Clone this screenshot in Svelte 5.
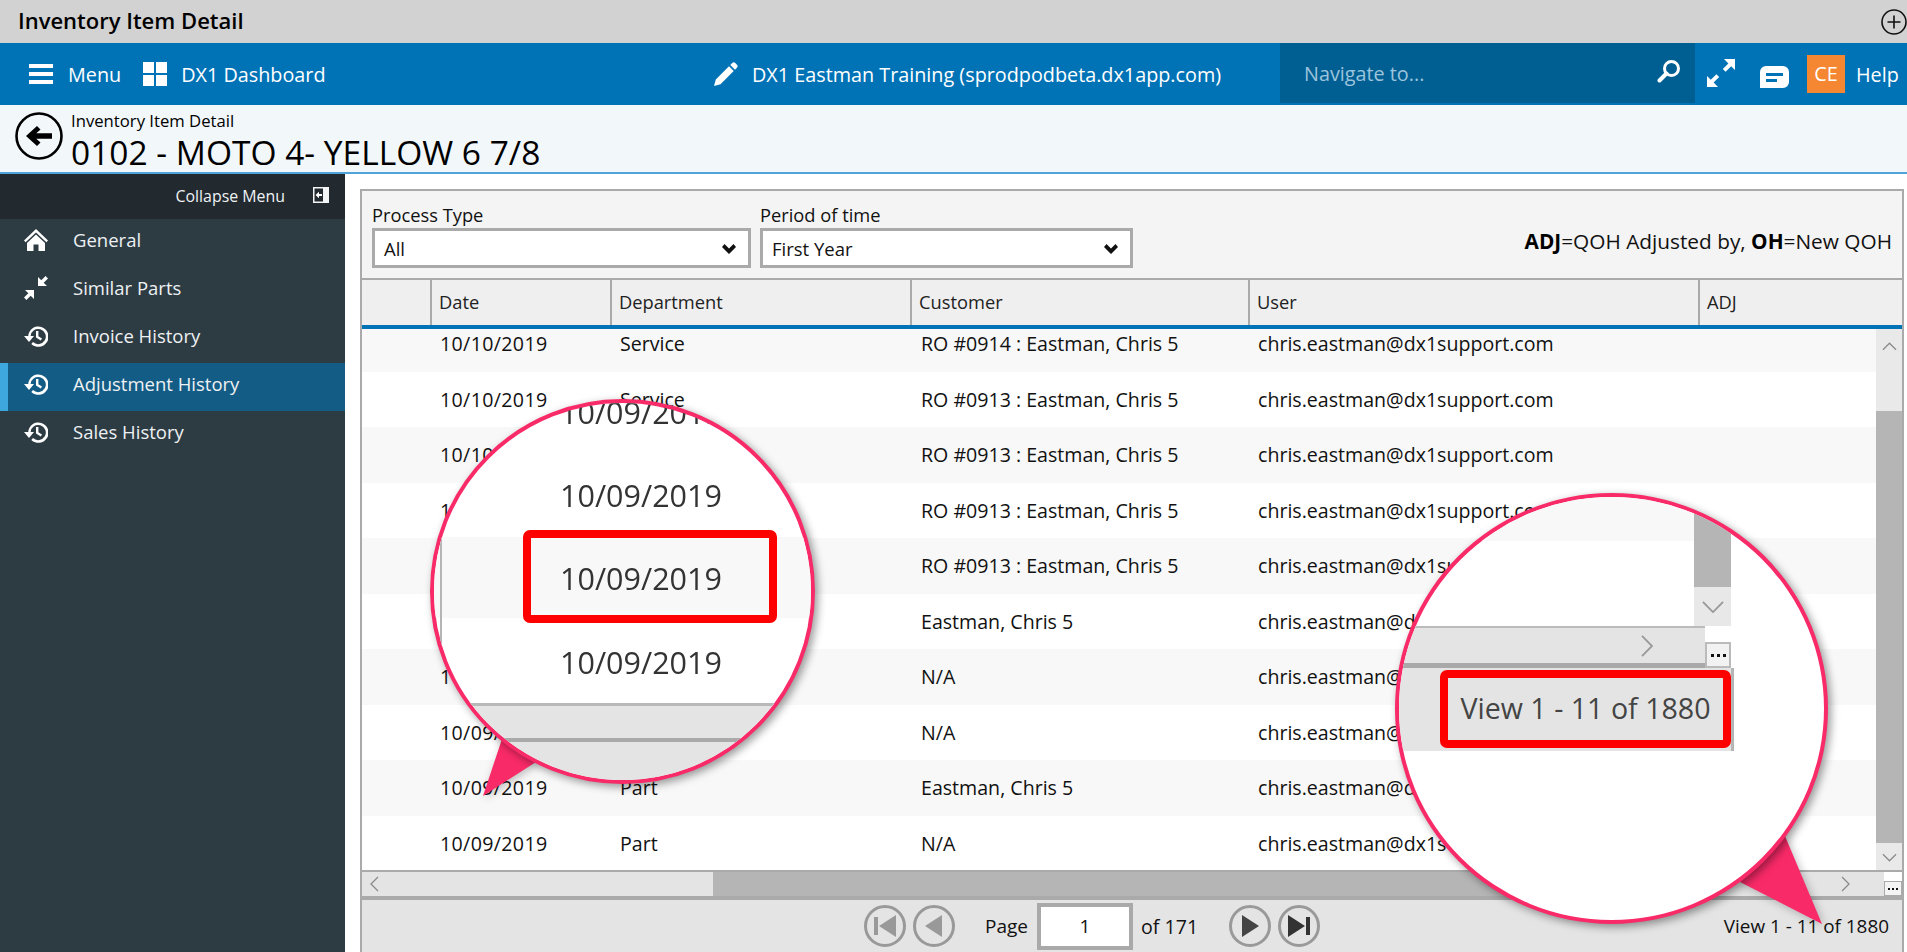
<script>
  const rows = [
    ['10/10/2019', 'Service', 'RO #0914 : Eastman, Chris 5'],
    ['10/10/2019', 'Service', 'RO #0913 : Eastman, Chris 5'],
    ['10/10/2019', 'Service', 'RO #0913 : Eastman, Chris 5'],
    ['10/09/2019', 'Service', 'RO #0913 : Eastman, Chris 5'],
    ['10/09/2019', 'Service', 'RO #0913 : Eastman, Chris 5'],
    ['10/09/2019', 'Part', 'Eastman, Chris 5'],
    ['10/09/2019', 'Part', 'N/A'],
    ['10/09/2019', 'Part', 'N/A'],
    ['10/09/2019', 'Part', 'Eastman, Chris 5'],
    ['10/09/2019', 'Part', 'N/A']
  ];
  const nav = [
    { label: 'General', icon: 'home' },
    { label: 'Similar Parts', icon: 'compress' },
    { label: 'Invoice History', icon: 'history' },
    { label: 'Adjustment History', icon: 'history', active: true },
    { label: 'Sales History', icon: 'history' }
  ];
</script>

<div class="page">
  <div class="titlebar">
    <span>Inventory Item Detail</span>
    <svg class="plus" viewBox="0 0 26 26"><circle cx="13" cy="13" r="12" fill="none" stroke="#111" stroke-width="1.6"/><path d="M6.5 13h13M13 6.5v13" stroke="#111" stroke-width="1.6"/></svg>
  </div>

  <div class="topnav">
    <div class="nav-left">
      <svg class="burger" viewBox="0 0 24 20"><path d="M0 0h24v4H0zM0 8h24v4H0zM0 16h24v4H0z" fill="#fff"/></svg>
      <span class="menu">Menu</span>
      <svg class="win" viewBox="0 0 24 24"><path d="M0 0h11v11H0zM13 0h11v11H13zM0 13h11v11H0zM13 13h11v11H13z" fill="#fff"/></svg>
      <span>DX1 Dashboard</span>
    </div>
    <div class="nav-mid">
      <svg class="pencil" viewBox="0 0 24 24"><path d="M0 24l1.800-6.500L15 4.300l4.700 4.700L6.500 22.200zM16.300 3l1.900-1.900a2.200 2.200 0 0 1 3.100 0l1.600 1.600a2.200 2.200 0 0 1 0 3.100L21 7.700z" fill="#fff"/></svg>
      <span>DX1 Eastman Training (sprodpodbeta.dx1app.com)</span>
    </div>
    <div class="search">
      <span>Navigate to...</span>
      <svg viewBox="0 0 24 24"><circle cx="14.500" cy="9.500" r="7" fill="none" stroke="#fff" stroke-width="3"/><path d="M9.500 14.500L2.500 21.500" stroke="#fff" stroke-width="4" stroke-linecap="round"/></svg>
    </div>
    <div class="nav-right">
      <svg class="expand" viewBox="0 0 28 28"><path d="M17 0h11v11l-3.800-3.800-5.600 5.600-2.800-2.800 5.600-5.600zM11 28H0V17l3.800 3.800 5.600-5.600 2.800 2.800-5.600 5.600z" fill="#fff"/></svg>
      <svg class="chat" viewBox="0 0 29 22"><path fill-rule="evenodd" d="M6 0h17a6 6 0 0 1 6 6v10a6 6 0 0 1-6 6H0V6a6 6 0 0 1 6-6zM6 7v3h17V7zM6 13v3h11v-3z" fill="#fff"/></svg>
      <span class="avatar">CE</span>
      <span class="help">Help</span>
    </div>
  </div>

  <div class="crumb">
    <svg class="back" viewBox="0 0 48 48"><circle cx="24" cy="24" r="22.500" fill="none" stroke="#000" stroke-width="2.600"/><path d="M11 24l11-10 3.500 3.500-4.200 3.700H37v5.600H21.300l4.200 3.700L22 34z" fill="#000"/></svg>
    <div>
      <div class="crumb-sub">Inventory Item Detail</div>
      <div class="crumb-title">0102 - MOTO 4- YELLOW 6 7/8</div>
    </div>
  </div>

  <div class="body">
    <aside>
      <div class="collapse">
        <span>Collapse Menu</span>
        <svg viewBox="0 0 16 16"><path d="M0 0h16v16H0z" fill="#f2f4f6"/><path d="M1.500 1.500H10v13H1.500z" fill="#22292f"/><path d="M9 7H6V4.800L2.500 8 6 11.200V9h3z" fill="#fff"/></svg>
      </div>
      {#each nav as item}
        <div class="item" class:active={item.active}>
          {#if item.icon === 'home'}
            <svg viewBox="0 0 24 24"><path d="M12 1L0 12.500l1.600 1.700L12 4.400l10.400 9.800 1.600-1.700zM12 6.600L3 15v8h6.500v-6.500h5V23H21v-8z" fill="#fff"/></svg>
          {:else if item.icon === 'compress'}
            <svg viewBox="0 0 24 24"><path d="M14 1v9h9l-3.300-3.300L24 2.400 21.600 0l-4.300 4.300zM10 23v-9H1l3.300 3.300L0 21.600 2.400 24l4.300-4.300z" fill="#fff"/></svg>
          {:else}
            <svg viewBox="0 0 24 24"><path d="M4.200 12H0l5 6 5-6H6.600a7.600 7.600 0 1 1 2.400 6.100l-1.700 1.900A10.200 10.200 0 1 0 4.200 12z" fill="#fff"/><path d="M12 7h2.400v5.200l3.600 2.200-1.200 2-4.800-3z" fill="#fff"/></svg>
          {/if}
          <span>{item.label}</span>
        </div>
      {/each}
    </aside>

    <main>
      <div class="panel">
        <div class="filters">
          <div class="field first"><span>Process Type</span>
            <div class="select">All<svg viewBox="0 0 14 10"><path d="M0 3l2.500-3L7 4.500 11.500 0 14 3l-7 7z" fill="#111"/></svg></div>
          </div>
          <div class="field second"><span>Period of time</span>
            <div class="select">First Year<svg viewBox="0 0 14 10"><path d="M0 3l2.500-3L7 4.500 11.500 0 14 3l-7 7z" fill="#111"/></svg></div>
          </div>
          <div class="legend"><b>ADJ</b>=QOH Adjusted by, <b>OH</b>=New QOH</div>
        </div>

        <div class="thead">
          <div class="c0"></div><div class="c1">Date</div><div class="c2">Department</div><div class="c3">Customer</div><div class="c4">User</div><div class="c5">ADJ</div>
        </div>

        <div class="tbody">
          <div class="rows">
            <div class="rows-inner">
              {#each rows as r}
                <div class="row">
                  <div class="c0"></div>
                  <div class="c1">{r[0]}</div>
                  <div class="c2">{r[1]}</div>
                  <div class="c3">{r[2]}</div>
                  <div class="c4">chris.eastman@dx1support.com</div>
                  <div class="c5"></div>
                </div>
              {/each}
            </div>
          </div>
          <div class="vscroll">
            <div class="arrow up"><svg viewBox="0 0 16 9"><path d="M1 8l7-7 7 7" fill="none" stroke="#8a8a8a" stroke-width="1.300"/></svg></div>
            <div class="vthumb"></div>
            <div class="arrow down"><svg viewBox="0 0 16 9"><path d="M1 1l7 7 7-7" fill="none" stroke="#8a8a8a" stroke-width="1.300"/></svg></div>
          </div>
        </div>

        <div class="hscroll">
          <div class="hleft"><svg viewBox="0 0 9 16"><path d="M8 1L1 8l7 7" fill="none" stroke="#8a8a8a" stroke-width="1.300"/></svg></div>
          <div class="hthumb"></div>
          <div class="hright"><svg viewBox="0 0 9 16"><path d="M1 1l7 7-7 7" fill="none" stroke="#8a8a8a" stroke-width="1.300"/></svg></div>
          <div class="corner"><div class="dots"><svg viewBox="0 0 10 2"><path d="M0 0h2v2H0zM4 0h2v2H4zM8 0h2v2H8z" fill="#111"/></svg></div></div>
        </div>

        <div class="pager">
          <div class="pager-mid">
            <svg class="pg" viewBox="0 0 42 42"><circle cx="21" cy="21" r="19.500" fill="none" stroke="#999" stroke-width="3"/><path d="M10 12h4v18h-4zM32 10v22L15 21z" fill="#999"/></svg>
            <svg class="pg" viewBox="0 0 42 42"><circle cx="21" cy="21" r="19.500" fill="none" stroke="#999" stroke-width="3"/><path d="M29 10v22L12 21z" fill="#999"/></svg>
            <span class="page-label">Page</span>
            <div class="page-input">1</div>
            <span class="page-of">of 171</span>
            <svg class="pg" viewBox="0 0 42 42"><circle cx="21" cy="21" r="19.500" fill="none" stroke="#999" stroke-width="3"/><path d="M13 10v22l17-11z" fill="#444"/></svg>
            <svg class="pg" viewBox="0 0 42 42"><circle cx="21" cy="21" r="19.500" fill="none" stroke="#999" stroke-width="3"/><path d="M10 10v22l17-11zM28 12h4v18h-4z" fill="#333"/></svg>
          </div>
          <span class="view">View 1 - 11 of 1880</span>
        </div>
      </div>
    </main>
  </div>

  <svg class="tail" viewBox="0 0 1907 952"><path d="M483 796L503 736 536 762z" fill="#f92a68"/><path d="M1822 924L1740 882 1785 836z" fill="#f92a68"/></svg>

  <div class="lens lens1">
    <div class="l1-vline"></div>
    <div class="l1-stripe"></div>
    <div class="l1-date" style="top:-11px">10/09/2019</div>
    <div class="l1-date" style="top:72px">10/09/2019</div>
    <div class="l1-date" style="top:155px">10/09/2019</div>
    <div class="l1-date" style="top:239px">10/09/2019</div>
    <div class="red red1"></div>
    <div class="l1-bar"></div>
    <div class="l1-foot"></div>
  </div>

  <div class="lens lens2">
    <div class="l2-stripe"></div>
    <div class="l2-vthumb"></div>
    <div class="l2-down"><svg viewBox="0 0 24 13"><path d="M1 1l11 11L23 1" fill="none" stroke="#999" stroke-width="2"/></svg></div>
    <div class="l2-hbar"><svg viewBox="0 0 13 24"><path d="M1 1l11 11L1 23" fill="none" stroke="#999" stroke-width="2"/></svg></div>
    <div class="l2-corner"><div><svg viewBox="0 0 10 2"><path d="M0 0h2v2H0zM4 0h2v2H4zM8 0h2v2H8z" fill="#111"/></svg></div></div>
    <div class="l2-foot"></div>
    <div class="red red2">View 1 - 11 of 1880</div>
  </div>
</div>

<style>
  :global(body) { margin: 0; background: #fff; }
  .page {
    position: relative; width: 1907px; height: 952px; overflow: hidden;
    display: flex; flex-direction: column;
    font-family: "Open Sans", "Noto Sans", sans-serif; font-size: 19.600px; color: #111;
  }
  .titlebar {
    height: 43px; flex: none; background: #d2d2d2; display: flex; align-items: center; justify-content: space-between;
    padding-left: 18px; font-size: 22px; font-weight: 600; color: #000;
  }
  .titlebar span { margin-top: -3px; }
  .plus { width: 26px; height: 26px; }

  .topnav {
    height: 62px; flex: none; background: #0073b7; color: #fff; font-size: 19.800px; display: flex; align-items: stretch; position: relative;
  }
  .nav-left { display: flex; align-items: center; padding-left: 29px; width: 690px; box-sizing: border-box; }
  .burger { width: 24px; height: 20px; margin-right: 15px; }
  .menu { margin-right: 22px; }
  .win { width: 24px; height: 24px; margin-right: 14px; }
  .nav-mid { display: flex; align-items: center; width: 590px; padding-left: 24px; box-sizing: border-box; }
  .pencil { width: 24px; height: 24px; margin-right: 14px; }
  .search {
    width: 415px; height: 60px; background: #005f92; color: #9cc4dc; display: flex; align-items: center; justify-content: space-between;
    padding: 0 14px 0 24px; box-sizing: border-box;
  }
  .search svg { width: 24px; height: 26px; margin-top: -4px; }
  .nav-right { display: flex; align-items: center; padding-left: 12px; }
  .expand { width: 28px; height: 28px; margin-right: 25px; margin-top: -2px; }
  .chat { width: 29px; height: 22px; margin-top: 5px; margin-right: 18px; }
  .avatar { width: 38px; height: 38px; margin-top: -1px; background: #f58733; display: flex; align-items: center; justify-content: center; margin-right: 11px; }

  .crumb { height: 67px; flex: none; background: #f2f7fa; border-bottom: 2px solid #4fa3d8; display: flex; padding-left: 15px; gap: 8px; }
  .back { width: 48px; height: 48px; margin-top: 7px; }
  .crumb-sub { font-size: 16.700px; line-height: 20px; margin-top: 6px; color: #000; }
  .crumb-title { font-size: 33.500px; line-height: 40px; margin-top: 1px; color: #000; white-space: nowrap; }

  .body { flex: 1; display: flex; min-height: 0; }
  aside { width: 345px; flex: none; background: #2d3b43; color: #fff; }
  .collapse {
    height: 45px; background: #22292f; display: flex; align-items: center; justify-content: flex-end; padding-right: 16px; gap: 28px; font-size: 15.900px; color: #f0f3f5;
  }
  .collapse span { margin-top: -1px; }
  .collapse svg { width: 16px; height: 16px; margin-top: -4px; }
  .item { height: 48px; display: flex; align-items: center; padding: 0 0 8px 24px; gap: 25px; font-size: 18.500px; color: #edf1f3; box-sizing: border-box; }
  .item svg { width: 24px; height: 24px; flex: none; margin-top: 2px; }
  .item.active { background: #135c85; border-left: 8px solid #3ea8de; padding-left: 16px; }

  main { flex: 1; min-width: 0; padding: 15px 3px 0 15px; background: #fff; display: flex; }
  .panel { flex: 1; border: 2px solid #aaa; border-bottom: 0; display: flex; flex-direction: column; min-width: 0; }
  .filters { height: 87px; flex: none; background: #f4f4f4; border-bottom: 2px solid #aaa; display: flex; align-items: flex-start; padding-left: 10px; }
  .field { display: flex; flex-direction: column; margin-top: 11px; line-height: 26px; font-size: 18.300px; color: #111; }
  .field.first { width: 379px; margin-right: 9px; }
  .field.second { width: 373px; }
  .select {
    height: 40px; box-sizing: border-box; border: 3px solid #aaa; background: #fff; padding: 1px 12px 0 9px;
    display: flex; align-items: center; justify-content: space-between; font-size: 18.500px;
  }
  .select svg { width: 14px; height: 10px; }
  .legend { margin-left: auto; margin-right: 10px; margin-top: 38px; line-height: 24px; font-size: 20.800px; color: #111; white-space: nowrap; }
  .legend b { font-weight: 700; color: #000; }

  .thead { height: 45px; flex: none; background: #efefef; display: flex; border-bottom: 4px solid #0073b7; font-size: 18.300px; color: #222; }
  .thead > div { display: flex; align-items: center; padding: 0 0 2px 7px; box-sizing: border-box; border-left: 2px solid #aaa; }
  .thead > .c0 { border-left: 0; }
  .c0 { width: 68px; flex: none; }
  .c1 { width: 180px; flex: none; }
  .c2 { width: 300px; flex: none; }
  .c3 { width: 338px; flex: none; }
  .c4 { width: 450px; flex: none; }
  .c5 { flex: 1; }

  .tbody { flex: none; height: 542px; display: flex; overflow: hidden; }
  .rows { flex: 1; min-width: 0; overflow: hidden; }
  .rows-inner { margin-top: -13px; }
  .row { height: 55.500px; display: flex; align-items: center; background: #fff; }
  .row:nth-child(odd) { background: #f8f8f8; }
  .row > div { padding-left: 10px; box-sizing: border-box; white-space: nowrap; }
  .row > .c1 { letter-spacing: .35px; }
  .row > .c3 { padding-left: 11px; }
  .vscroll { width: 26px; flex: none; display: flex; flex-direction: column; background: #e9e9e9; }
  .arrow { height: 28px; display: flex; align-items: center; justify-content: center; }
  .arrow.up { height: 82px; align-items: flex-start; padding-top: 13px; box-sizing: border-box; }
  .arrow svg { width: 15px; height: 9px; }
  .vthumb { flex: 1; background: #b5b5b5; }

  .hscroll { height: 24px; flex: none; display: flex; background: #e4e4e4; border-top: 2px solid #aaa; border-bottom: 4px solid #aaa; margin-top: -1px; }
  .hleft { width: 351px; flex: none; padding-left: 8px; box-sizing: border-box; display: flex; align-items: center; }
  .hleft svg, .hright svg { width: 9px; height: 16px; }
  .hthumb { width: 900px; flex: none; background: #b5b5b5; }
  .hright { flex: 1; display: flex; align-items: center; justify-content: flex-end; padding-right: 34px; }
  .corner { width: 18px; flex: none; background: #fff; display: flex; align-items: flex-end; }
  .dots { width: 100%; height: 15px; background: #f4f4f4; border: 1px solid #aaa; box-sizing: border-box; display: flex; align-items: center; justify-content: center; }
  .dots svg { width: 10px; height: 2px; }

  .pager { flex: 1; background: #e4e4e4; display: flex; align-items: center; position: relative; }
  .pager-mid { display: flex; align-items: center; margin-left: 502px; }
  .pg { width: 42px; height: 42px; margin-right: 7px; }
  .page-label { margin-left: 23px; width: 52px; font-size: 19px; }
  .page-input { width: 96px; height: 47px; box-sizing: border-box; border: 4px solid #a9a9a9; background: #fff; display: flex; align-items: center; justify-content: center; font-size: 19px; }
  .page-of { margin-left: 8px; width: 72px; white-space: nowrap; }
  .pager-mid .pg:nth-last-child(2) { margin-left: 16px; }
  .view { position: absolute; right: 13px; font-size: 18.900px; white-space: nowrap; }

  .tail { position: absolute; left: 0; top: 0; width: 1907px; height: 952px; pointer-events: none; filter: drop-shadow(2px 2px 4px rgba(0,0,0,.25)); }
  .lens {
    position: absolute; border-radius: 50%; border: 4px solid #f92a68; box-sizing: border-box; background: #fff; overflow: hidden;
    box-shadow: 3px 3px 9px rgba(0,0,0,.4);
  }
  .lens1 { left: 430px; top: 399px; width: 385px; height: 385px; }
  .l1-date { position: absolute; left: 126px; font-size: 30.500px; line-height: 40px; color: #333; white-space: nowrap; filter: blur(.35px); }
  .l1-stripe { position: absolute; left: 0; right: 0; top: 134px; height: 81px; background: #f8f8f8; }
  .l1-vline { position: absolute; left: 6px; top: 134px; height: 170px; width: 2px; background: #b5b5b5; z-index: 1; }
  .red { position: absolute; border: 8px solid #f00; border-radius: 7px; box-sizing: border-box; }
  .red1 { left: 89px; top: 127px; width: 254px; height: 93px; }
  .l1-bar { position: absolute; left: 0; right: 0; top: 300px; height: 39px; background: #e4e4e4; border-top: 3px solid #b9b9b9; border-bottom: 4px solid #a9a9a9; box-sizing: border-box; }
  .l1-foot { position: absolute; left: 0; right: 0; top: 339px; bottom: 0; background: #e4e4e4; }

  .lens2 { left: 1395px; top: 493px; width: 433px; height: 431px; }
  .l2-stripe { position: absolute; left: 0; top: 0; height: 44px; background: #f8f8f8; width: 295px; }
  .l2-vthumb { position: absolute; left: 295px; top: 0; width: 37px; height: 90px; background: #b5b5b5; }
  .l2-down { position: absolute; left: 295px; top: 90px; width: 37px; height: 39px; background: #e8e8e8; display: flex; align-items: center; justify-content: center; }
  .l2-down svg { width: 22px; height: 12px; }
  .l2-hbar { position: absolute; left: 0; top: 129px; width: 306px; height: 42px; background: #e4e4e4; border-top: 2px solid #bbb; border-bottom: 5px solid #a9a9a9; box-sizing: border-box; display: flex; align-items: center; justify-content: flex-end; padding-right: 52px; }
  .l2-hbar svg { width: 12px; height: 22px; }
  .l2-corner { position: absolute; left: 306px; top: 133px; width: 26px; height: 38px; background: #fff; display: flex; align-items: flex-end; }
  .l2-corner div { width: 100%; height: 26px; background: #f2f2f2; border: 2px solid #bbb; box-sizing: border-box; display: flex; align-items: center; justify-content: center; }
  .l2-corner svg { width: 15px; height: 3px; }
  .l2-foot { position: absolute; left: 0; top: 171px; width: 332px; height: 83px; background: #e4e4e4; border-right: 3px solid #b5b5b5; }
  .red2 { left: 41px; top: 173px; width: 291px; height: 78px; display: flex; align-items: center; justify-content: center; font-size: 28.600px; color: #444; white-space: nowrap; padding-bottom: 4px; }
</style>
